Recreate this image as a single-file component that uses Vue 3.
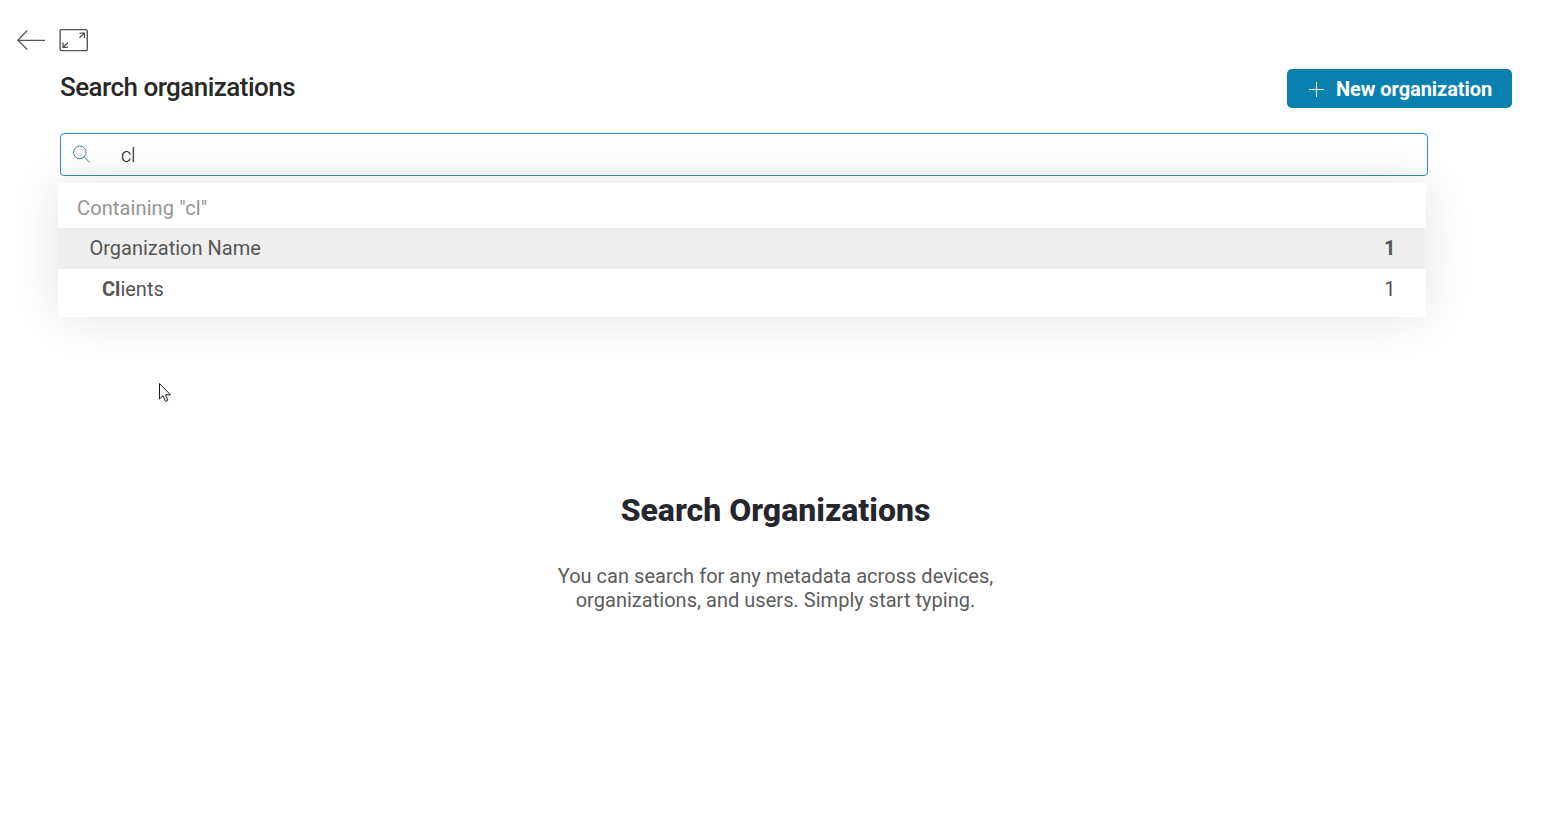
<script setup>
const query = 'cl'
</script>

<template>
  <main class="page">
    <nav class="tools">
      <svg class="back" width="30" height="22" viewBox="0 0 30 22" fill="none" stroke="#555" stroke-width="1.2">
        <path d="M11.3 1.5 1.8 11.3 11.3 20.5M1.8 11.4H29" />
      </svg>
      <svg class="expand" width="30" height="24" viewBox="0 0 30 24" fill="none" stroke="#555" stroke-width="1.4">
        <rect x="1.1" y="1.6" width="27.2" height="21" rx="1.5" />
        <path d="M20.5 5.1H25.5V10M25.2 5.4 20.5 9.8M4 14.5V19.4H9M4.3 19.1 9 14.8" />
      </svg>
    </nav>
    <header class="heading">
      <h1>Search organizations</h1>
      <button class="new-org">
        <svg width="15" height="15" viewBox="0 0 15 15" stroke="#fff" fill="none"><path d="M7.5 0V15M0 7.5H15" /></svg>
        <span>New organization</span>
      </button>
    </header>
    <section class="search">
      <div class="field">
        <svg width="19" height="19" viewBox="0 0 19 19" fill="none" stroke="#4386ab" stroke-width="1"><circle cx="7.8" cy="7.3" r="6.3" /><path d="m12.3 11.8 5.5 5.9" /></svg>
        <span>{{ query }}</span>
      </div>
      <div class="results">
        <div class="caption">Containing "{{ query }}"</div>
        <div class="row group"><span>Organization Name</span><b>1</b></div>
        <div class="row item"><span><b>Cl</b>ients</span><span>1</span></div>
      </div>
    </section>
    <section class="empty">
      <h2>Search Organizations</h2>
      <p>You can search for any metadata across devices,<br />organizations, and users. Simply start typing.</p>
    </section>
    <svg class="cursor" width="14" height="21" viewBox="0 0 14 21">
      <path d="M1.5 1.5V17L5 13.7 7.4 19.2Q9 19.5 9.8 18.3L7.5 12.8H12.4Z" fill="#fff" stroke="#15151f" stroke-width="1" />
    </svg>
  </main>
</template>

<style>
body {
  margin: 0;
  background: #fff;
}
</style>

<style scoped>
.page {
  position: relative;
  box-sizing: border-box;
  width: 1553px;
  height: 835px;
  overflow: hidden;
  background: #fff;
  color: #555;
  font-family: Roboto, sans-serif;
  font-size: 20px;
  line-height: 24px;
}
.tools {
  display: flex;
  align-items: center;
  gap: 13px;
  height: 24px;
  padding: 28px 0 0 16px;
}
.heading {
  display: flex;
  justify-content: space-between;
  align-items: flex-start;
  height: 64px;
  margin: 17px 41px 0 60px;
}
h1 {
  margin: 2px 0 0;
  color: #282828;
  font-size: 26px;
  font-weight: 500;
  letter-spacing: -0.53px;
  line-height: 33px;
}
.new-org {
  display: flex;
  align-items: center;
  gap: 12px;
  box-sizing: border-box;
  width: 225px;
  height: 39px;
  padding: 1px 0 0 22px;
  border: 0;
  border-radius: 5px;
  background: #0a80ae;
  color: #fff;
  font: 700 20px/24px Roboto, sans-serif;
  letter-spacing: -0.06px;
  white-space: nowrap;
}
.search {
  width: 1368px;
  margin-left: 60px;
}
.field {
  display: flex;
  align-items: center;
  gap: 30px;
  box-sizing: border-box;
  height: 43px;
  padding-left: 11px;
  border: 1px solid #2f8fb8;
  border-radius: 4px;
  color: #222;
}
.field span {
  font-weight: 300;
  letter-spacing: -0.4px;
}
.results {
  position: relative;
  box-sizing: border-box;
  height: 134px;
  margin: 7px 2px 0 -2px;
  width: 1368px;
  background: #fff;
  box-shadow: 0 0 50px rgba(0, 0, 0, 0.11);
}
.caption {
  box-sizing: border-box;
  height: 45px;
  padding: 13px 19px 0;
  color: #949494;
  letter-spacing: 0.12px;
}
.row {
  display: flex;
  justify-content: space-between;
  align-items: center;
  box-sizing: border-box;
  height: 41px;
  padding-right: 30.5px;
  padding-bottom: 2px;
}
.group {
  padding-left: 31.5px;
  background: #efefef;
}
.item {
  padding-left: 44px;
}
.empty {
  margin-top: 172px;
  padding-right: 2px;
  text-align: center;
}
h2 {
  margin: 0;
  color: #26262e;
  font-size: 32px;
  font-weight: 800;
  line-height: 42px;
}
p {
  margin: 33px 0 0;
  color: #5c5c5c;
  letter-spacing: 0.03px;
}
.cursor {
  position: absolute;
  left: 158px;
  top: 382px;
}
</style>
